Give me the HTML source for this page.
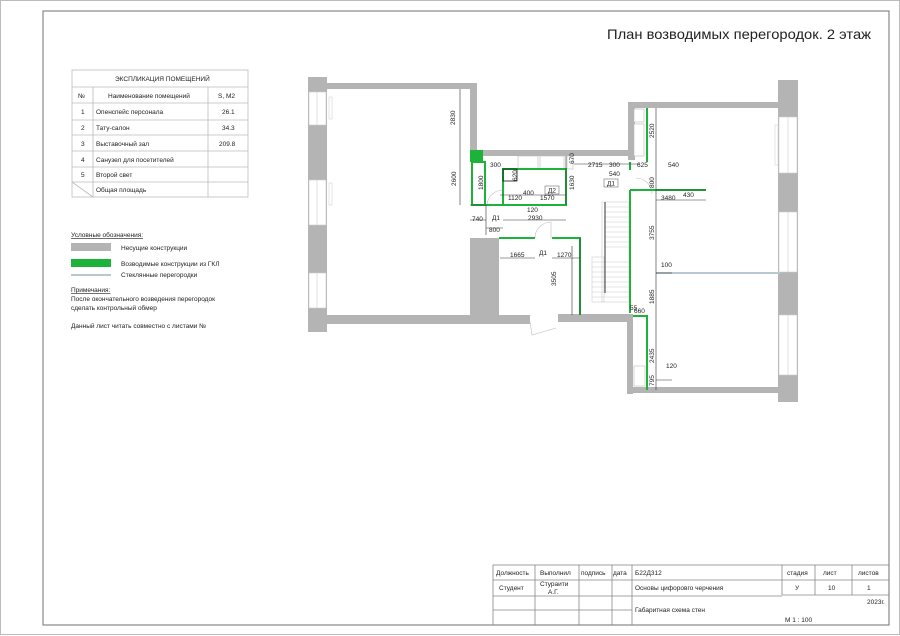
<!DOCTYPE html>
<html><head><meta charset="utf-8"><style>
html,body{margin:0;padding:0;background:#fff}
svg{display:block}
text{font-family:"Liberation Sans",sans-serif;fill:#222}
</style></head><body>
<svg width="900" height="636" viewBox="0 0 900 636" xmlns="http://www.w3.org/2000/svg">
<!-- sheet borders -->
<rect x="0.5" y="0.5" width="899" height="634" fill="none" stroke="#bbb" stroke-width="1"/>
<rect x="43" y="11" width="846" height="614" fill="none" stroke="#888" stroke-width="1.2"/>
<text x="607" y="39" font-size="14" textLength="264" lengthAdjust="spacingAndGlyphs" fill="#111">План возводимых перегородок. 2 этаж</text>

<!-- explication table -->
<g stroke="#bbb" stroke-width="0.8" fill="none">
<rect x="72" y="70" width="176" height="127"/>
<line x1="72" y1="87" x2="248" y2="87"/><line x1="72" y1="103" x2="248" y2="103"/>
<line x1="72" y1="120" x2="248" y2="120"/><line x1="72" y1="135" x2="248" y2="135"/>
<line x1="72" y1="151" x2="248" y2="151"/><line x1="72" y1="167" x2="248" y2="167"/>
<line x1="72" y1="182" x2="248" y2="182"/>
<line x1="93" y1="87" x2="93" y2="197"/><line x1="208" y1="87" x2="208" y2="197"/>
<line x1="72" y1="182" x2="93" y2="197"/>
</g>
<g font-size="6.5">
<text x="115" y="81">ЭКСПЛИКАЦИЯ ПОМЕЩЕНИЙ</text>
<text x="78" y="98">№</text><text x="108" y="98">Наименование помещений</text><text x="218" y="98">S, М2</text>
<text x="81" y="114">1</text><text x="96" y="114">Опенспейс персонала</text><text x="222" y="114">26.1</text>
<text x="81" y="130">2</text><text x="96" y="130">Тату-салон</text><text x="222" y="130">34.3</text>
<text x="81" y="146">3</text><text x="96" y="146">Выставочный зал</text><text x="219" y="146">209.8</text>
<text x="81" y="162">4</text><text x="96" y="162">Санузел для посетителей</text>
<text x="81" y="177">5</text><text x="96" y="177">Второй свет</text>
<text x="96" y="192">Общая площадь</text>
</g>
<!-- legend -->
<g font-size="6.5">
<text x="71" y="237" text-decoration="underline">Условные обозначения:</text>
<rect x="71" y="243" width="40" height="8" fill="#b4b4b4"/><text x="121" y="250">Несущие конструкции</text>
<rect x="71" y="259" width="40" height="8" fill="#1db33a"/><text x="121" y="266">Возводимые конструкции из ГКЛ</text>
<rect x="71" y="274" width="40" height="2" fill="#b8c8d0"/><text x="121" y="277">Стеклянные перегородки</text>
<text x="71" y="292" text-decoration="underline">Примечания:</text>
<text x="71" y="301">После окончательного возведения перегородок</text>
<text x="71" y="310">сделать контрольный обмер</text>
<text x="71" y="328">Данный лист читать совместно с листами №</text>
</g>

<!-- PLAN walls -->
<g fill="#b4b4b4">
<rect x="308" y="77" width="19" height="255"/>
<rect x="327" y="83" width="150" height="6"/>
<rect x="470" y="83" width="7" height="73"/>
<rect x="470" y="150" width="165" height="6"/>
<rect x="628" y="102" width="7" height="58"/>
<rect x="630" y="102" width="150" height="6"/>
<rect x="778" y="80" width="20" height="322"/>
<rect x="327" y="315" width="203" height="9"/>
<rect x="470" y="238" width="29" height="77"/>
<rect x="558" y="314" width="72" height="8"/>
<rect x="627" y="314" width="6" height="80"/>
<rect x="627" y="387" width="153" height="6"/>
</g>
<!-- windows -->
<g fill="#fff" stroke="#ccc" stroke-width="0.6">
<rect x="309" y="92" width="17" height="33"/><rect x="309" y="180" width="17" height="45"/><rect x="309" y="273" width="17" height="35"/>
<rect x="779" y="117" width="18" height="56"/><rect x="779" y="212" width="18" height="60"/><rect x="779" y="315" width="18" height="60"/>
</g>
<g stroke="#ccc" stroke-width="0.6">
<line x1="317" y1="92" x2="317" y2="125"/><line x1="317" y1="180" x2="317" y2="225"/><line x1="317" y1="273" x2="317" y2="308"/>
<line x1="788" y1="117" x2="788" y2="173"/><line x1="788" y1="212" x2="788" y2="272"/><line x1="788" y1="315" x2="788" y2="375"/>
</g>
<rect x="329" y="97" width="3" height="22" fill="#fff" stroke="#ccc" stroke-width="0.5"/>
<rect x="329" y="183" width="3" height="22" fill="#fff" stroke="#ccc" stroke-width="0.5"/>
<rect x="775" y="125" width="3" height="40" fill="#fff" stroke="#ccc" stroke-width="0.5"/>

<!-- fixtures -->
<g fill="#fff" stroke="#bbb" stroke-width="0.6">
<rect x="518" y="156" width="20" height="13"/><rect x="540" y="156" width="24" height="13"/>
<rect x="567" y="156" width="6" height="13"/>
<rect x="634" y="109" width="10" height="13"/><rect x="634" y="124" width="10" height="32"/>
<rect x="634" y="366" width="11" height="20"/>
</g>
<!-- stairs -->
<g stroke="#ccc" stroke-width="0.6" fill="none">
<rect x="602" y="202" width="27" height="100"/>
<rect x="592" y="257" width="12" height="45"/>
<path d="M604 207H629M604 212H629M604 217H629M604 222H629M604 227H629M604 232H629M604 237H629M604 242H629M604 247H629M592 262H629M592 267H629M592 272H629M592 277H629M592 282H629M592 287H629M592 292H629M592 297H629"/>
</g>
<line x1="605" y1="202" x2="605" y2="293" stroke="#555" stroke-width="1.2"/>
<!-- door arcs -->
<g stroke="#bbb" stroke-width="0.6" fill="none">
<path d="M487 205 A16 16 0 0 1 503 190 V205"/>
<path d="M535 238 A16 16 0 0 1 551 222 V238"/>
<path d="M636 178 A16 16 0 0 1 652 194"/>
<path d="M530 322 L532 335 L556 328"/>
</g>

<!-- green partitions -->
<g fill="none" stroke="#1db33a" stroke-width="2">
<rect x="472" y="162" width="13" height="43"/>
<rect x="503" y="169" width="63" height="36"/>
<line x1="485" y1="205" x2="566" y2="205"/>
<line x1="499" y1="238" x2="535" y2="238"/>
<path d="M552 238H580V315"/>
<line x1="630" y1="190" x2="630" y2="313"/>
<line x1="630" y1="190" x2="706" y2="190"/>
<line x1="647" y1="108" x2="647" y2="162"/>
<line x1="647" y1="315" x2="647" y2="390"/>
<line x1="633" y1="316" x2="647" y2="316"/>
<line x1="630" y1="162" x2="630" y2="170"/>
</g>
<rect x="470" y="150" width="13" height="12" fill="#1db33a"/>
<rect x="503" y="169" width="14" height="12" fill="none" stroke="#111" stroke-width="0.8"/>
<!-- glass -->
<line x1="656" y1="273" x2="780" y2="273" stroke="#b8c8d0" stroke-width="2"/>

<!-- dimension lines -->
<g stroke="#333" stroke-width="0.6" fill="none">
<path d="M460 89V150M460 150V205M470 205H486M470 220H486M486 205V235M486 228H503M503 220H566M500 195H566M566 169V205M566 156V169M656 108V390M656 190H706M656 200H706M656 273H672M656 380H672M500 258H535M552 258H580M580 238V315M572 246V315M574 164H640"/>
</g>
<g font-size="6.5">
<text x="455" y="125" transform="rotate(-90 455 125)">2830</text>
<text x="456" y="186" transform="rotate(-90 456 186)">2600</text>
<text x="483" y="190" transform="rotate(-90 483 190)">1800</text>
<text x="490" y="167">300</text>
<text x="472" y="221">740</text>
<text x="489" y="232">800</text>
<text x="492" y="220">Д1</text>
<text x="528" y="220">2930</text>
<text x="508" y="200">1120</text>
<text x="523" y="195">400</text>
<text x="540" y="200">1570</text>
<text x="527" y="212">120</text>
<rect x="545" y="186" width="14" height="8" fill="#fff" stroke="#555" stroke-width="0.5"/><text x="548" y="192.5">Д2</text>
<text x="517" y="181" transform="rotate(-90 517 181)">620</text>
<text x="574" y="190" transform="rotate(-90 574 190)">1630</text>
<text x="574" y="164" transform="rotate(-90 574 164)">670</text>
<text x="588" y="167">2715</text><text x="609" y="167">300</text>
<text x="609" y="176">540</text>
<rect x="604" y="179" width="14" height="8" fill="#fff" stroke="#555" stroke-width="0.5"/><text x="607" y="185.5">Д1</text>
<text x="637" y="167">625</text><text x="668" y="167">540</text>
<text x="654" y="138" transform="rotate(-90 654 138)">2520</text>
<text x="654" y="188" transform="rotate(-90 654 188)">800</text>
<text x="683" y="197">430</text><text x="661" y="200">3480</text>
<text x="654" y="240" transform="rotate(-90 654 240)">3755</text>
<text x="661" y="267">100</text>
<text x="654" y="304" transform="rotate(-90 654 304)">1885</text>
<text x="630" y="310">55</text><text x="634" y="313">660</text>
<text x="654" y="363" transform="rotate(-90 654 363)">2435</text>
<text x="666" y="368">120</text>
<text x="654" y="386" transform="rotate(-90 654 386)">795</text>
<text x="510" y="257">1665</text>
<text x="539" y="255">Д1</text>
<text x="557" y="257">1270</text>
<text x="556" y="286" transform="rotate(-90 556 286)">3505</text>
</g>

<!-- title block -->
<g stroke="#888" stroke-width="0.8" fill="none">
<rect x="493" y="565" width="396" height="60"/>
<line x1="493" y1="580" x2="889" y2="580"/>
<line x1="493" y1="596" x2="632" y2="596"/><line x1="493" y1="610" x2="632" y2="610"/>
<line x1="782" y1="595" x2="889" y2="595"/>
<line x1="632" y1="596" x2="782" y2="596"/>
<line x1="535" y1="565" x2="535" y2="625"/><line x1="579" y1="565" x2="579" y2="625"/>
<line x1="612" y1="565" x2="612" y2="625"/><line x1="632" y1="565" x2="632" y2="625"/>
<line x1="782" y1="565" x2="782" y2="595"/><line x1="815" y1="565" x2="815" y2="595"/><line x1="852" y1="565" x2="852" y2="595"/>
</g>
<g font-size="6.5">
<text x="496" y="575">Должность</text><text x="540" y="575">Выполнил</text><text x="581" y="575">подпись</text><text x="613" y="575">дата</text>
<text x="635" y="575">Б22Д312</text>
<text x="787" y="575">стадия</text><text x="823" y="575">лист</text><text x="858" y="575">листов</text>
<text x="499" y="590">Студент</text><text x="540" y="586">Стураити</text><text x="548" y="594">А.Г.</text>
<text x="635" y="590">Основы цифоровго черчения</text>
<text x="795" y="590">У</text><text x="828" y="590">10</text><text x="867" y="590">1</text>
<text x="635" y="612">Габаритная схема стен</text>
<text x="867" y="604">2023г.</text>
<text x="785" y="622">М 1 : 100</text>
</g>
</svg>
</body></html>
